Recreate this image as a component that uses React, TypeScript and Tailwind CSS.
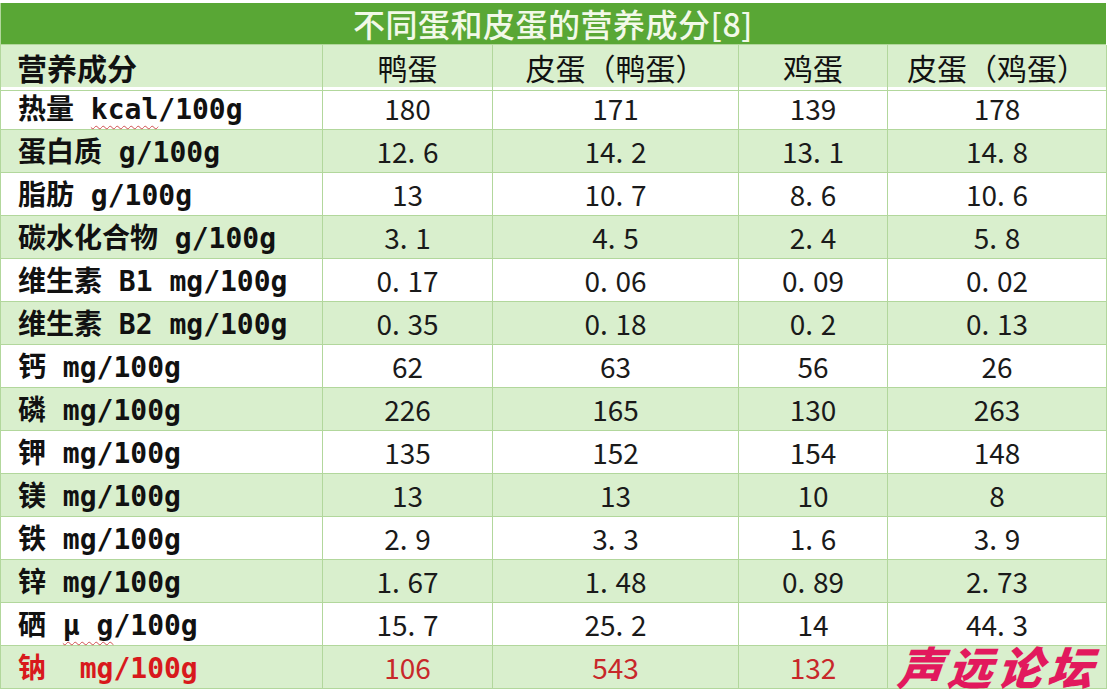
import React from "react";

const FONT = '"Noto Sans CJK SC", "Noto Sans", sans-serif';
const LABEL_FONT = '"DejaVu Sans Mono", "Noto Sans CJK SC", monospace';

type Row = { label: React.ReactNode; vals: string[]; red?: boolean };

function Num({ v }: { v: string }) {
  const parts = v.split(".");
  if (parts.length === 1) return <>{v}</>;
  return (
    <>
      {parts[0]}
      <span className="inline-block w-[0.55em] text-left">.</span>
      {parts[1]}
    </>
  );
}

const wavy = "underline decoration-wavy decoration-[#d05050] decoration-1 underline-offset-[6px]";

const rows: Row[] = [
  {
    label: (
      <>
        热量 <span className={wavy}>kcal</span>/100g
      </>
    ),
    vals: ["180", "171", "139", "178"],
  },
  { label: "蛋白质 g/100g", vals: ["12.6", "14.2", "13.1", "14.8"] },
  { label: "脂肪 g/100g", vals: ["13", "10.7", "8.6", "10.6"] },
  { label: "碳水化合物 g/100g", vals: ["3.1", "4.5", "2.4", "5.8"] },
  { label: "维生素 B1 mg/100g", vals: ["0.17", "0.06", "0.09", "0.02"] },
  { label: "维生素 B2 mg/100g", vals: ["0.35", "0.18", "0.2", "0.13"] },
  { label: "钙 mg/100g", vals: ["62", "63", "56", "26"] },
  { label: "磷 mg/100g", vals: ["226", "165", "130", "263"] },
  { label: "钾 mg/100g", vals: ["135", "152", "154", "148"] },
  { label: "镁 mg/100g", vals: ["13", "13", "10", "8"] },
  { label: "铁 mg/100g", vals: ["2.9", "3.3", "1.6", "3.9"] },
  { label: "锌 mg/100g", vals: ["1.67", "1.48", "0.89", "2.73"] },
  {
    label: (
      <>
        硒 <span className={wavy}>μ g</span>/100g
      </>
    ),
    vals: ["15.7", "25.2", "14", "44.3"],
  },
  {
    label: <>钠  mg/100g</>,
    vals: ["106", "543", "132", ""],
    red: true,
  },
];

const cols = "grid grid-cols-[322px_170px_246px_149px_219px]";
const cellB = "border-r border-b border-[#b2d79c] flex items-center";

export default function App() {
  return (
    <div
      className="w-[1109px] h-[689px] bg-white overflow-hidden pt-[3px] relative"
      style={{ fontFamily: FONT }}
    >
      <div className="w-[1106px] border-l border-[#b2d79c]">
        <div className="h-[41px] bg-[#59a735] flex items-center justify-center border-r border-[#59a735]">
          <span className="text-[32px] leading-none font-medium text-[#f2f9e8] tracking-[0.5px] -mt-[2px]">
            不同蛋和皮蛋的营养成分[8]
          </span>
        </div>
        <div className={`${cols} h-[43px] bg-[#d9efcd] border-t border-[#b2d79c]`}>
          <div className={`${cellB} pl-[16px] text-[30px] font-bold text-[#111]`}>营养成分</div>
          {["鸭蛋", "皮蛋（鸭蛋）", "鸡蛋", "皮蛋（鸡蛋）"].map((h) => (
            <div key={h} className={`${cellB} justify-center text-[30px] text-[#111]`}>
              {h}
            </div>
          ))}
        </div>
        {rows.map((r, i) => (
          <div
            key={i}
            className={`${cols} h-[43px] ${i % 2 === 0 ? "bg-white" : "bg-[#d9efcd]"}`}
          >
            <div
              className={`${cellB} pl-[17px] text-[28px] font-bold ${
                r.red ? "text-[#d8191c]" : "text-[#111]"
              }`}
              style={{ fontFamily: LABEL_FONT }}
            >
              <span className="whitespace-pre translate-y-[2px]">{r.label}</span>
            </div>
            {r.vals.map((v, j) => (
              <div
                key={j}
                className={`${cellB} justify-center text-[28px] ${
                  r.red ? "text-[#c8282a]" : "text-[#1a1a1a]"
                }`}
              >
                <Num v={v} />
              </div>
            ))}
          </div>
        ))}
      </div>
      <div className="absolute left-[898px] top-[642px] h-[46px] flex items-center text-[45px] leading-none font-black italic text-[#e2195d] tracking-[5px] -skew-x-6">
        声远论坛
      </div>
    </div>
  );
}
